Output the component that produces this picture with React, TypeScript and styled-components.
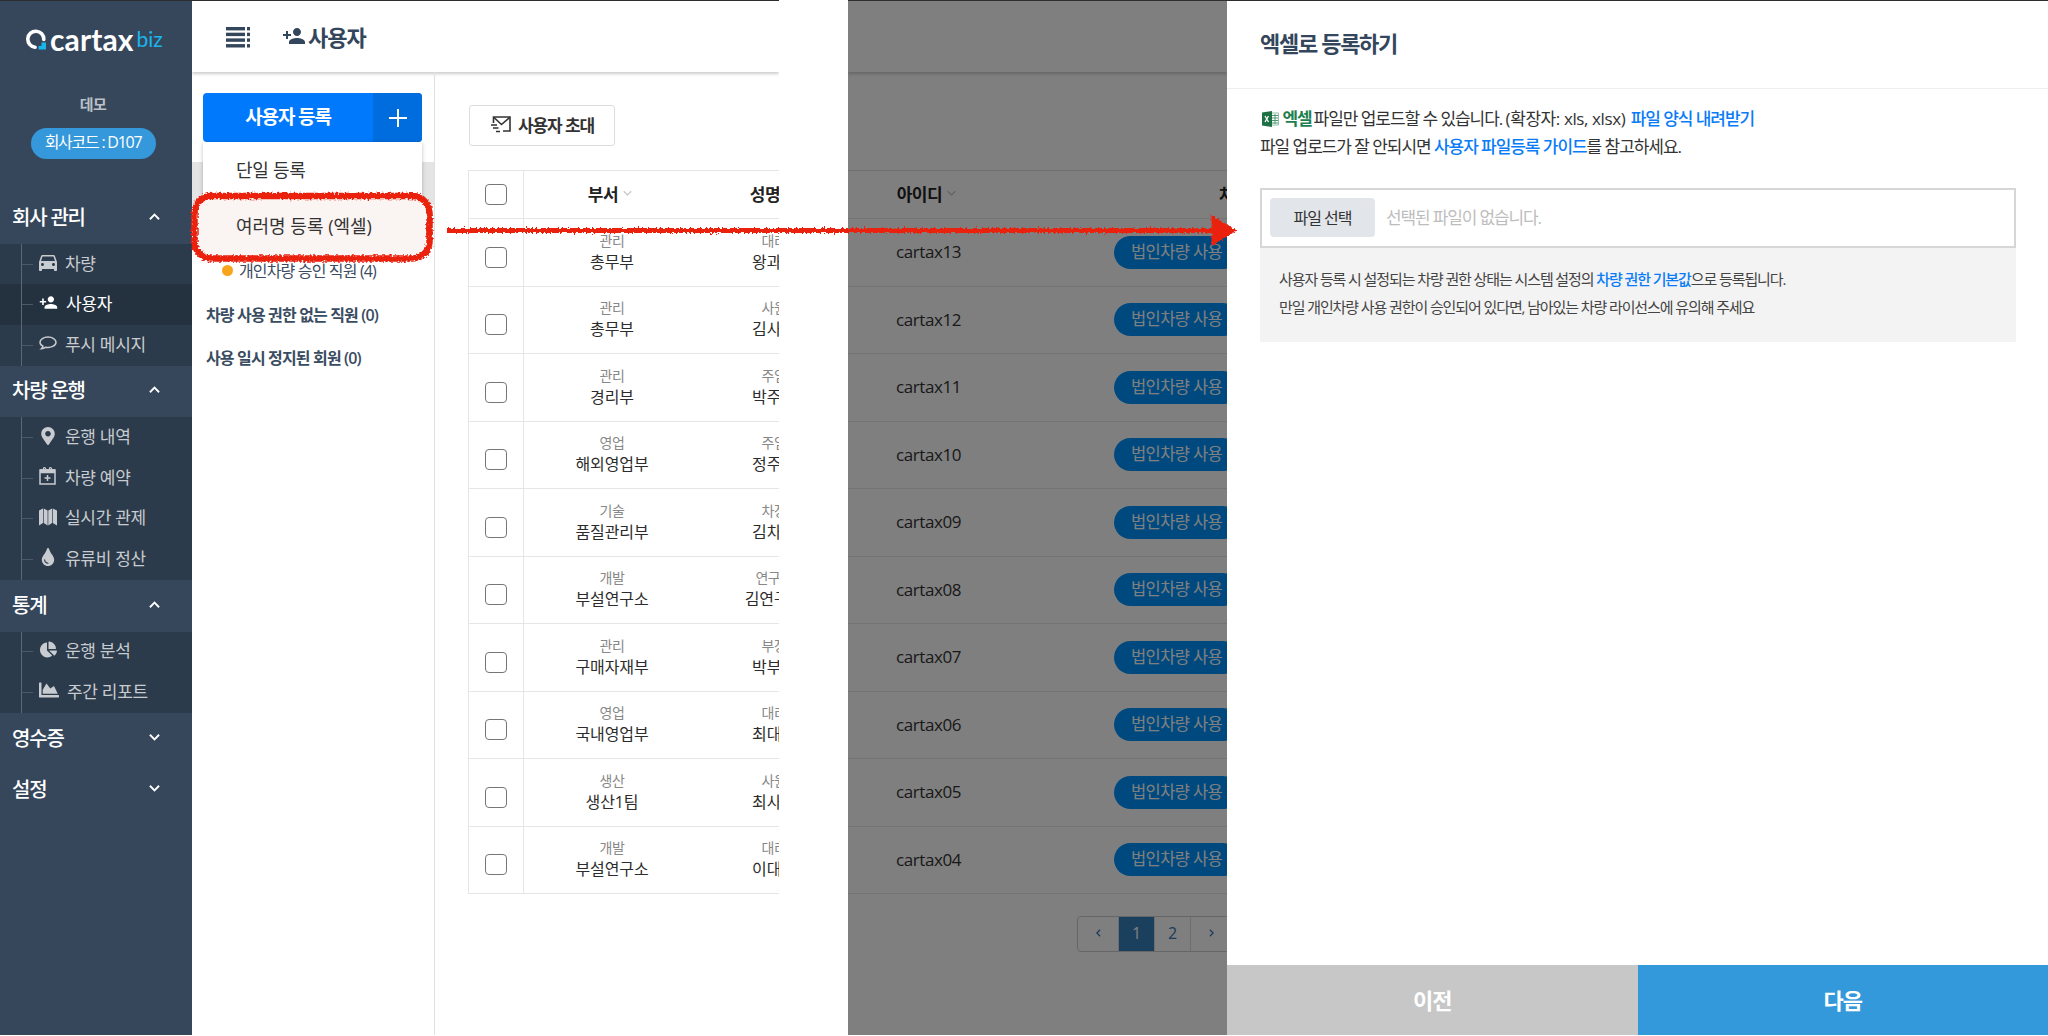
import React from 'react';
import styled, { createGlobalStyle, css } from 'styled-components';
import { FaMapMarkerAlt, FaTint, FaChartPie, FaChartArea } from 'react-icons/fa';
import { MdDirectionsCar, MdPersonAddAlt1 } from 'react-icons/md';

type MenuItem = { label: string; icon: React.ReactNode; active?: boolean };
type MenuGroup = { title: string; items?: MenuItem[] };

const BubbleIcon = () => (
    <svg width="18" height="18" viewBox="0 0 18 18" fill="none" stroke="currentColor" strokeWidth="1.5">
        <path d="M9 3C4.6 3 1 5.3 1 8.2c0 1.7 1.2 3.1 3 4-.2 1-.8 1.8-1.6 2.5 1.9-.1 3.3-.8 4.4-1.5 4.9.9 10.2-1.3 10.2-5C17 5.3 13.4 3 9 3z" />
    </svg>
);

const CalendarIcon = () => (
    <svg width="18" height="20" viewBox="0 0 18 20" fill="none" stroke="currentColor" strokeWidth="1.5">
        <path d="M1 4h15v14H1z" />
        <path d="M1 4.5h15M1 6h15" strokeWidth="2.5" />
        <path d="M4.5 6V2.5a1 1 0 0 1 2 0V6M10.5 6V2.5a1 1 0 0 1 2 0V6" strokeWidth="1.2" />
        <path d="M8.5 9v6M5.5 12h6" />
    </svg>
);

const MapIcon = () => (
    <svg width="18" height="18" viewBox="0 0 18 18" fill="currentColor">
        <path d="M0 2.5L4 .5V15l-4 2.5zM9.3 2.5l3.7-2V15l-3.7 2.5z" />
        <path d="M4.7 .5l3.9 2v15L4.700 15zM13.700 .5l4.300 2v15L13.700 15z" />
    </svg>
);

const groups: MenuGroup[] = [
    {
        title: '회사 관리',
        items: [
            { label: '차량', icon: <MdDirectionsCar size={24} /> },
            { label: '사용자', icon: <MdPersonAddAlt1 className="flip" size={19} />, active: true },
            { label: '푸시 메시지', icon: <BubbleIcon /> },
        ],
    },
    {
        title: '차량 운행',
        items: [
            { label: '운행 내역', icon: <FaMapMarkerAlt size={18} /> },
            { label: '차량 예약', icon: <CalendarIcon /> },
            { label: '실시간 관제', icon: <MapIcon /> },
            { label: '유류비 정산', icon: <FaTint size={18} /> },
        ],
    },
    {
        title: '통계',
        items: [
            { label: '운행 분석', icon: <FaChartPie size={17} /> },
            { label: '주간 리포트', icon: <FaChartArea size={20} /> },
        ],
    },
    { title: '영수증' },
    { title: '설정' },
];

const users = [
    { division: '관리', team: '총무부', rank: '대리', name: '왕과장', id: 'cartax13' },
    { division: '관리', team: '총무부', rank: '사원', name: '김사원', id: 'cartax12' },
    { division: '관리', team: '경리부', rank: '주임', name: '박주임', id: 'cartax11' },
    { division: '영업', team: '해외영업부', rank: '주임', name: '정주임', id: 'cartax10' },
    { division: '기술', team: '품질관리부', rank: '차장', name: '김차장', id: 'cartax09' },
    { division: '개발', team: '부설연구소', rank: '연구원', name: '김연구원', id: 'cartax08' },
    { division: '관리', team: '구매자재부', rank: '부장', name: '박부장', id: 'cartax07' },
    { division: '영업', team: '국내영업부', rank: '대리', name: '최대리', id: 'cartax06' },
    { division: '생산', team: '생산1팀', rank: '사원', name: '최사원', id: 'cartax05' },
    { division: '개발', team: '부설연구소', rank: '대리', name: '이대리', id: 'cartax04' },
];

const Chevron = ({ up, size = 11 }: { up?: boolean; size?: number }) => (
    <svg width={size} height={size} viewBox="0 0 12 12" fill="none" stroke="currentColor" strokeWidth="2">
        <path d={up ? 'M1 9l5-5 5 5' : 'M1 3l5 5 5-5'} />
    </svg>
);

const Logo = () => (
    <LogoWrap>
        <svg width="20" height="21" viewBox="0 0 20 21" fill="none">
            <path d="M9 18.200A8 8 0 1 1 17.800 10.500" stroke="#fff" strokeWidth="3.600" strokeLinecap="round" />
            <path d="M12.500 20.500V17h3v-3.500H20v7z" fill="#19b5ec" />
        </svg>
        <LogoName>cartax</LogoName>
        <LogoBiz>biz</LogoBiz>
    </LogoWrap>
);

const Sidebar = () => (
    <StyledSidebar>
        <Logo />
        <Company>데모</Company>
        <CompanyCode>회사코드 : D107</CompanyCode>
        <Nav>
            {groups.map((group) => (
                <div key={group.title}>
                    <GroupTitle>
                        {group.title}
                        <Chevron up={!!group.items} />
                    </GroupTitle>
                    {group.items && (
                        <SubMenu>
                            {group.items.map((item) => (
                                <SubItem key={item.label} $active={item.active}>
                                    <Branch />
                                    <IconSlot>{item.icon}</IconSlot>
                                    {item.label}
                                </SubItem>
                            ))}
                        </SubMenu>
                    )}
                </div>
            ))}
        </Nav>
    </StyledSidebar>
);

const ListIcon = () => (
    <svg width="24" height="21" viewBox="0 0 24 21" fill="#34465b">
        {[0, 5.7, 11.4, 17.1].map((y) => (
            <g key={y}>
                <rect x="0" y={y} width="19" height="3.4" />
                <rect x="21" y={y} width="3" height="3.4" />
            </g>
        ))}
    </svg>
);

const InviteIcon = () => (
    <svg width="20" height="17" viewBox="0 0 20 17" fill="none" stroke="#333" strokeWidth="1.6">
        <path d="M2.5 7V1H19v14h-7" />
        <path d="M3 1.5l7.5 7 8-7" />
        <path d="M0 9h6M2 12h5.5M5 15.5h4" />
    </svg>
);

const UserPane = () => (
    <StyledUserPane>
        <TopBar>
            <ListIcon />
            <PageTitle>
                <MdPersonAddAlt1 className="flip" size={24} />
                사용자
            </PageTitle>
        </TopBar>
        <PaneBody>
            <Filters>
                <RegisterButton>
                    <span>사용자 등록</span>
                    <PlusBox>
                        <svg width="18" height="18" viewBox="0 0 18 18" stroke="#fff" strokeWidth="2">
                            <path d="M9 0v18M0 9h18" />
                        </svg>
                    </PlusBox>
                </RegisterButton>
                <FilterBand />
                <FilterList>
                    <FilterItem $nested><Dot />개인차량 승인 직원 (4)</FilterItem>
                    <FilterItem>차량 사용 권한 없는 직원 (0)</FilterItem>
                    <FilterItem>사용 일시 정지된 회원 (0)</FilterItem>
                </FilterList>
                <Dropdown>
                    <DropdownItem>단일 등록</DropdownItem>
                    <DropdownItem $highlighted>여러명 등록 (엑셀)</DropdownItem>
                </Dropdown>
            </Filters>
            <UserTable>
                <InviteButton><InviteIcon />사용자 초대</InviteButton>
                <Table>
                    <HeadRow>
                        <CheckCell><Checkbox /></CheckCell>
                        <TeamCell><HeadLabel>부서<Chevron size={9} /></HeadLabel></TeamCell>
                        <NameCell><HeadLabel>성명<Chevron size={9} /></HeadLabel></NameCell>
                    </HeadRow>
                    {users.map((user) => (
                        <Row key={user.id}>
                            <CheckCell $low><Checkbox /></CheckCell>
                            <TeamCell><Small>{user.division}</Small><Strong>{user.team}</Strong></TeamCell>
                            <NameCell><Small>{user.rank}</Small><Strong>{user.name}</Strong></NameCell>
                        </Row>
                    ))}
                </Table>
            </UserTable>
        </PaneBody>
    </StyledUserPane>
);

const DimmedPane = () => (
    <StyledDimmedPane>
        <TopBar />
        <DimmedTable>
            <HeadRow>
                <IdCell><HeadLabel>아이디<Chevron size={9} /></HeadLabel></IdCell>
                <StatusHead><HeadLabel>차량 권한</HeadLabel></StatusHead>
            </HeadRow>
            {users.map((user) => (
                <Row key={user.id}>
                    <IdCell>{user.id}</IdCell>
                    <StatusCell><Pill>법인차량 사용</Pill></StatusCell>
                </Row>
            ))}
        </DimmedTable>
        <Pagination>
            <PageButton $wide><PageArrow viewBox="0 0 6 10"><path d="M5 1L1 5l4 4" /></PageArrow></PageButton>
            <PageButton $current>1</PageButton>
            <PageButton>2</PageButton>
            <PageButton $wide><PageArrow viewBox="0 0 6 10"><path d="M1 1l4 4-4 4" /></PageArrow></PageButton>
        </Pagination>
    </StyledDimmedPane>
);

const ExcelIcon = () => (
    <svg width="17" height="16" viewBox="0 0 17 16">
        <path d="M9 2h7.5v12H9z" fill="#fff" stroke="#8fbfa5" />
        <path d="M10 4.5h6M10 7h6M10 9.5h6M10 12h6M13 3v10" stroke="#4f9a74" />
        <path d="M0 1.5L10 0v16L0 14.5z" fill="#1d7044" />
        <path d="M3 5l3.5 6M6.5 5L3 11" stroke="#fff" strokeWidth="1.3" />
    </svg>
);

const ExcelPanel = () => (
    <Panel>
        <PanelTitle>엑셀로 등록하기</PanelTitle>
        <PanelBody>
            <Guide>
                <ExcelIcon /> <Green>엑셀</Green>파일만 업로드할 수 있습니다. <Ext>(확장자: xls, xlsx)</Ext> <Link>파일 양식 내려받기</Link>
                <br />
                파일 업로드가 잘 안되시면 <Link>사용자 파일등록 가이드</Link>를 참고하세요.
            </Guide>
            <FileField>
                <FileButton>파일 선택</FileButton>
                선택된 파일이 없습니다.
            </FileField>
            <Note>
                사용자 등록 시 설정되는 차량 권한 상태는 시스템 설정의 <Link>차량 권한 기본값</Link>으로 등록됩니다.
                <br />
                만일 개인차량 사용 권한이 승인되어 있다면, 남아있는 차량 라이선스에 유의해 주세요
            </Note>
        </PanelBody>
        <PanelFooter>
            <FooterButton>이전</FooterButton>
            <FooterButton $primary>다음</FooterButton>
        </PanelFooter>
    </Panel>
);

// crayon outline and arrow drawn over the panes
const Annotation = () => (
    <StyledAnnotation width="2048" height="1036" viewBox="0 0 2048 1036" fill="none">
        <filter id="crayon" filterUnits="userSpaceOnUse" x="180" y="180" width="1080" height="100">
            <feTurbulence type="fractalNoise" baseFrequency="0.5" numOctaves="2" seed="4" />
            <feDisplacementMap in="SourceGraphic" scale="6" xChannelSelector="R" yChannelSelector="G" />
        </filter>
        <g filter="url(#crayon)" stroke="#ea2410">
            <rect x="194.5" y="196" width="235" height="62.5" rx="17" strokeWidth="6.500" />
            <path d="M447 230.500H1215" strokeWidth="5" />
            <path d="M1213 218l21 12.500-21 13z" fill="#ea2410" strokeWidth="3" />
        </g>
    </StyledAnnotation>
);

const App = () => (
    <>
        <GlobalStyle />
        <Page>
            <Sidebar />
            <UserPane />
            <DimmedPane />
            <ExcelPanel />
            <Annotation />
        </Page>
    </>
);

export default App;

const GlobalStyle = createGlobalStyle`
  * {
    box-sizing: border-box;
  }

  body {
    margin: 0;
    background: #fff;
    font-family: "Open Sans", "Noto Sans CJK KR", sans-serif;
    color: #333;
  }

  button {
    font-family: inherit;
    border: none;
    padding: 0;
  }

  .flip {
    transform: scaleX(-1);
  }
`

const Page = styled.div`
  position: relative;
  display: flex;
  width: 2048px;
  height: 1036px;
  padding-bottom: 1px;
  overflow: hidden;
  white-space: nowrap;
`

const topLine = css`
  border-top: 1px solid #2d2d31;
`

const StyledSidebar = styled.aside`
  ${topLine};
  width: 192px;
  flex-shrink: 0;
  display: flex;
  flex-direction: column;
  align-items: center;
  background: #36475c;
  color: #fff;
`

const LogoWrap = styled.div`
  display: flex;
  align-items: center;
  width: 140px;
  height: 28px;
  margin: 24px 0 0 0;
`

const LogoName = styled.span`
  margin-left: 4px;
  font-family: Lato, sans-serif;
  font-size: 30px;
  font-weight: 700;
  line-height: 24px;
  letter-spacing: 0.1px;
`

const LogoBiz = styled.span`
  margin-left: 3px;
  font-family: Lato, sans-serif;
  font-size: 21px;
  line-height: 28px;
  color: #19b5ec;
`

const Company = styled.div`
  margin-top: 39px;
  line-height: 24px;
  font-size: 15px;
  font-weight: 700;
  letter-spacing: -0.5px;
  margin-right: 6px;
  color: #bcc1c7;
`

const CompanyCode = styled.div`
  margin: 12px 6px 0 0;
  width: 125px;
  height: 31px;
  border-radius: 16px;
  background: #3498db;
  font-size: 16px;
  letter-spacing: -1.25px;
  line-height: 29px;
  text-align: center;
`

const Nav = styled.nav`
  width: 100%;
  margin-top: 33px;
`

const GroupTitle = styled.div`
  display: flex;
  align-items: center;
  justify-content: space-between;
  height: 51.8px;
  padding: 0 32px 3px 12px;
  font-size: 20px;
  font-weight: 500;
  letter-spacing: -1.2px;
`

const SubMenu = styled.div`
  background: #2c3b4b;
`

const SubItem = styled.div<{ $active?: boolean }>`
  display: flex;
  align-items: center;
  height: 40.6px;
  padding: 0 0 4px 21px;
  font-size: 17px;
  letter-spacing: -0.3px;
  background: ${props => props.$active ? '#243240' : 'transparent'};
  color: ${props => props.$active ? '#fff' : '#c8cbcf'};
`

const Branch = styled.span`
  width: 12px;
  align-self: stretch;
  margin-bottom: -4px;
  border-left: 1px solid #596879;
  background: linear-gradient(#4b5a6a, #4b5a6a) center / 100% 1px no-repeat;
`

const IconSlot = styled.span`
  display: flex;
  align-items: center;
  justify-content: center;
  min-width: 18px;
  margin: 0 8px 0 6px;

  svg {
    flex-shrink: 0;
  }

  svg[width="24"] {
    margin: 0 -3px;
  }
`

const StyledUserPane = styled.section`
  ${topLine};
  width: 587px;
  flex-shrink: 0;
  overflow: hidden;
`

const TopBar = styled.header`
  display: flex;
  align-items: center;
  height: 71px;
  padding: 1px 0 0 34px;
  box-shadow: 0 2px 3px rgba(0, 0, 0, 0.2);
`

const PageTitle = styled.h1`
  display: flex;
  align-items: center;
  margin: 0 0 2px 32px;
  gap: 2px;
  font-size: 22px;
  font-weight: 700;
  letter-spacing: -1px;
  color: #34465b;
`

const PaneBody = styled.div`
  display: flex;
  height: 963px;
`

const Filters = styled.div`
  position: relative;
  width: 243px;
  flex-shrink: 0;
  padding-top: 21px;
  border-right: 1px solid #e0e0e0;
`

const RegisterButton = styled.button`
  display: flex;
  width: 219px;
  height: 49px;
  margin-left: 11px;
  border-radius: 4px;
  overflow: hidden;
  background: #0079fc;
  color: #fff;
  font-size: 19px;
  font-weight: 700;
  letter-spacing: -1.1px;
  line-height: 49px;

  span {
    flex: 1;
  }
`

const PlusBox = styled.div`
  width: 49px;
  height: 49px;
  display: flex;
  align-items: center;
  justify-content: center;
  background: #006ddf;
`

const FilterBand = styled.div`
  height: 43px;
  margin-top: 20px;
  background: #e4e4e4;
`

const FilterList = styled.div`
  padding: 43.5px 0 0 14px;
`

const FilterItem = styled.div<{ $nested?: boolean }>`
  display: flex;
  align-items: center;
  height: 43.5px;
  padding-left: ${props => props.$nested ? '16px' : 0};
  font-size: 16px;
  font-weight: ${props => props.$nested ? 400 : 600};
  letter-spacing: -0.85px;
  color: #3a4c61;
`

const Dot = styled.span`
  width: 11px;
  height: 11px;
  margin-right: 6px;
  border-radius: 50%;
  background: #f8a51b;
`

const Dropdown = styled.div`
  position: absolute;
  top: 70px;
  left: 11px;
  width: 219px;
  background: #fff;
  box-shadow: 0 1px 4px rgba(0, 0, 0, 0.25);
`

const DropdownItem = styled.div<{ $highlighted?: boolean }>`
  height: 54px;
  padding-left: 33px;
  line-height: 56px;
  font-size: 18px;
  letter-spacing: -0.3px;

  ${props => props.$highlighted && css`
    height: 62px;
    margin: 0 -8px;
    padding-left: 41px;
    line-height: 61px;
    letter-spacing: 0;
    border-radius: 17px;
    background: #faf4f2;
  `}
`

const UserTable = styled.div`
  width: 412px;
  flex-shrink: 0;
  padding: 33px 0 0 33px;
`

const InviteButton = styled.button`
  display: flex;
  align-items: center;
  justify-content: center;
  gap: 7px;
  width: 146px;
  height: 41px;
  margin: 0 0 24px 1px;
  padding: 0 0 2px 1px;
  border: 1px solid #ddd;
  border-radius: 3px;
  background: #fff;
  font-size: 17px;
  font-weight: 700;
  letter-spacing: -1.1px;
  color: #333;
`

const Table = styled.div`
  border-top: 1px solid #e6e6e6;
  border-left: 1px solid #e6e6e6;
`

const Row = styled.div`
  display: flex;
  height: 67.5px;
  border-bottom: 1px solid #e6e6e6;
`

const HeadRow = styled(Row)`
  height: 48px;
`

const CheckCell = styled.div<{ $low?: boolean }>`
  display: flex;
  align-items: center;
  justify-content: center;
  width: 55px;
  flex-shrink: 0;
  padding-top: ${props => props.$low ? '10px' : 0};
  border-right: 1px solid #e6e6e6;
`

const Checkbox = styled.span`
  width: 22px;
  height: 21px;
  border: 1.5px solid #767676;
  border-radius: 4px;
  background: #fff;
`

const Cell = styled.div`
  display: flex;
  flex-direction: column;
  flex-shrink: 0;
  align-items: center;
  justify-content: center;
`

const TeamCell = styled(Cell)`
  width: 177px;
  padding-right: 1px;
`

const NameCell = styled(Cell)`
  width: 146px;
`

const HeadLabel = styled.div`
  display: flex;
  align-items: center;
  gap: 5px;
  margin: 0 4px 2px 0;
  font-size: 17px;
  font-weight: 700;
  letter-spacing: -0.4px;
  color: #222;

  svg {
    color: #ccc;
  }
`

const Small = styled.span`
  margin-top: -1px;
  font-size: 14px;
  line-height: 21px;
  letter-spacing: -0.5px;
  color: #888;
`

const Strong = styled.span`
  font-size: 16px;
  line-height: 23px;
  letter-spacing: -0.1px;
  color: #2c2c2c;
`

const StyledDimmedPane = styled.section`
  ${topLine};
  position: relative;
  width: 379px;
  flex-shrink: 0;
  margin-left: 69px;
  overflow: hidden;

  &::after {
    content: "";
    position: absolute;
    inset: 0;
    background: rgba(0, 0, 0, 0.5);
  }
`

const DimmedTable = styled.div`
  margin-top: 98px;
  border-top: 1px solid #e0e0e0;
`

const IdCell = styled(Cell)`
  width: 161px;
  padding-bottom: 1px;
  font-size: 17px;
  letter-spacing: -0.4px;
`

const StatusCell = styled(Cell)`
  align-items: flex-start;
  padding: 0 0 0 105px;
`

const StatusHead = styled(StatusCell)`
  padding-left: 210px;
`

const Pill = styled.span`
  height: 33px;
  padding: 0 17px;
  border-radius: 17px;
  background: #0093ff;
  color: #fff;
  font-size: 16.5px;
  letter-spacing: -0.6px;
  line-height: 31px;
`

const Pagination = styled.div`
  display: flex;
  width: 190px;
  height: 36px;
  margin: 22px 0 0 229px;
  border: 1px solid #ccc;
  border-radius: 4px;
`

const PageButton = styled.span<{ $wide?: boolean; $current?: boolean }>`
  width: ${props => props.$wide ? '41px' : '36px'};
  flex-shrink: 0;
  border-right: 1px solid #ddd;
  background: ${props => props.$current ? '#3480bc' : 'transparent'};
  color: ${props => props.$current ? '#fff' : '#337ab7'};
  font-size: 16px;
  line-height: 32px;
  text-align: center;
`

const PageArrow = styled.svg`
  width: 5px;
  height: 8px;
  margin-bottom: 2px;
  fill: none;
  stroke: currentColor;
  stroke-width: 1.6;
`

const Panel = styled.section`
  ${topLine};
  flex: 1;
  display: flex;
  flex-direction: column;
  background: #fff;
`

const PanelTitle = styled.h2`
  height: 88px;
  margin: 0;
  padding-left: 33px;
  border-bottom: 1px solid #eee;
  font-size: 22px;
  font-weight: 700;
  letter-spacing: -1.3px;
  line-height: 84px;
  color: #34465b;
`

const PanelBody = styled.div`
  flex: 1;
  padding: 16px 32px 0 33px;
`

const Guide = styled.p`
  margin: 0 0 28px;
  font-size: 17px;
  line-height: 27.5px;
  letter-spacing: -1.05px;

  svg {
    margin-left: 2px;
    vertical-align: -2px;
  }
`

const Green = styled.strong`
  margin-right: 2px;
  color: #1d8050;
`

const Ext = styled.span`
  margin-right: 2px;
  letter-spacing: -0.4px;
`

const Link = styled.a`
  font-weight: 500;
  color: #0a7cf7;
`

const FileField = styled.div`
  display: flex;
  align-items: center;
  height: 60px;
  padding: 0 0 1px 8px;
  border: 2px solid #d6d6d6;
  font-size: 17px;
  line-height: 36px;
  letter-spacing: -1.15px;
  color: #bdbdbd;
`

const FileButton = styled.button`
  width: 105px;
  height: 39px;
  margin-right: 11px;
  padding-bottom: 2px;
  border-radius: 4px;
  background: #e2e5e9;
  font-size: 16px;
  letter-spacing: -1px;
  color: #333;
`

const Note = styled.p`
  height: 94px;
  margin: 0;
  padding: 18px 19px 0;
  background: #f3f3f3;
  font-size: 15px;
  line-height: 27.5px;
  letter-spacing: -1.1px;
  color: #444;
`

const PanelFooter = styled.footer`
  display: flex;
  height: 70px;
`

const FooterButton = styled.button<{ $primary?: boolean }>`
  flex: 1;
  padding-bottom: 2px;
  background: ${props => props.$primary ? '#3499da' : '#c7c7c7'};
  color: #fff;
  font-size: 22px;
  font-weight: 700;
  letter-spacing: -1px;
`

const StyledAnnotation = styled.svg`
  position: absolute;
  top: 0;
  left: 0;
  pointer-events: none;
`
